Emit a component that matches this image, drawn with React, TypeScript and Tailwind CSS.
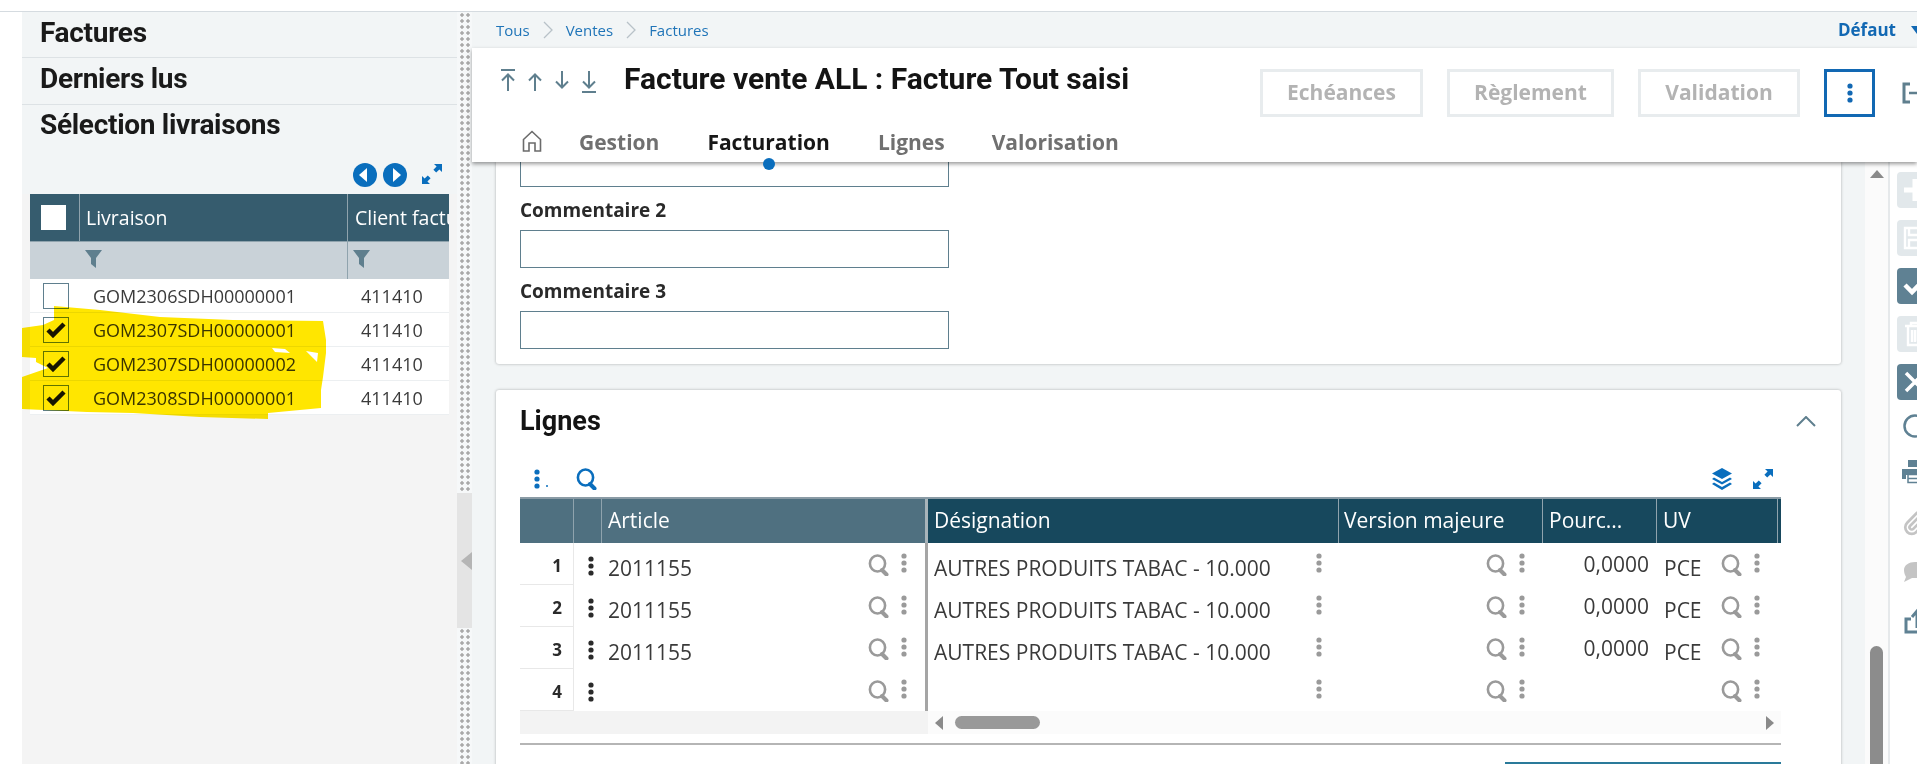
import React from 'react';
import { Paperclip } from 'lucide-react';

const SANS = "font-['Open_Sans',sans-serif]";
const HEAD = "font-['Roboto',sans-serif]";

const DELIVERIES = [
  { id: 'GOM2306SDH00000001', client: '411410', checked: false },
  { id: 'GOM2307SDH00000001', client: '411410', checked: true },
  { id: 'GOM2307SDH00000002', client: '411410', checked: true },
  { id: 'GOM2308SDH00000001', client: '411410', checked: true },
];

const LINES = [
  { n: 1, article: '2011155', label: 'AUTRES PRODUITS TABAC - 10.000', pct: '0,0000', uv: 'PCE' },
  { n: 2, article: '2011155', label: 'AUTRES PRODUITS TABAC - 10.000', pct: '0,0000', uv: 'PCE' },
  { n: 3, article: '2011155', label: 'AUTRES PRODUITS TABAC - 10.000', pct: '0,0000', uv: 'PCE' },
  { n: 4, article: '', label: '', pct: '', uv: '' },
];

function Kebab({ className }: { className: string }) {
  return (
    <svg width="6" height="20" viewBox="0 0 6 20" className={className} fill="currentColor">
      <circle cx="3" cy="3" r="2.6" />
      <circle cx="3" cy="10" r="2.6" />
      <circle cx="3" cy="17" r="2.6" />
    </svg>
  );
}

function SearchIcon({ className }: { className: string }) {
  return (
    <svg width="22" height="22" viewBox="0 0 22 22" className={className} fill="none" stroke="currentColor">
      <ellipse cx="9.5" cy="9.5" rx="7.6" ry="8" strokeWidth="2.6" />
      <path d="M14 16l4.5 4.5" strokeWidth="4" strokeLinecap="round" />
    </svg>
  );
}

function Funnel() {
  return (
    <svg width="17" height="18" viewBox="0 0 17 18" className="text-[#5f7f8e]" fill="currentColor">
      <path d="M0 0h17l-6 8v10l-5-4V8z" />
    </svg>
  );
}

function ExpandIcon() {
  return (
    <svg width="22" height="22" viewBox="0 0 22 22" className="text-[#0a6ebd]" fill="currentColor">
      <path d="M13 1h8v8l-2.6-2.6-3.2 3.2-2.8-2.8 3.2-3.2z" />
      <path d="M1 21v-8l2.6 2.6 3.2-3.2 2.8 2.8-3.2 3.2L9 21z" />
    </svg>
  );
}

function NavArrow({ dir, bar }: { dir: 'up' | 'down'; bar: boolean }) {
  return (
    <svg width="16" height="24" viewBox="0 0 16 24" fill="none" stroke="#5f7f8e" strokeWidth="2" className="shrink-0">
      {dir === 'up' ? (
        <>
          {bar && <path d="M1 1h14" />}
          <path d="M8 22V6M2 11.5L8 5.5l6 6" />
        </>
      ) : (
        <>
          {bar && <path d="M1 23h14" />}
          <path d="M8 2v16M2 12.5l6 6 6-6" />
        </>
      )}
    </svg>
  );
}

function PlainCheck() {
  return (
    <svg width="20" height="16" viewBox="0 0 20 16" fill="none" stroke="#171717" strokeWidth="4.5">
      <path d="M2 8l5 5L18 2" />
    </svg>
  );
}

function LeftPanel() {
  return (
    <aside className="relative w-[435px] shrink-0 bg-[#f4f4f4]">
      <div className={`${HEAD} bg-[#f2f5f6] text-[28px] font-bold tracking-[-0.3px] text-[#1a1a1a]`}>
        <div className="flex h-[46px] items-center border-b border-[#dde2e5] pb-[4px] pl-[18px]">Factures</div>
        <div className="flex h-[47px] items-center border-b border-[#dde2e5] pb-[4px] pl-[18px]">Derniers lus</div>
        <div className="flex h-[44px] items-center pb-[4px] pl-[18px]">Sélection livraisons</div>
        <div className="flex h-[45px] items-start justify-end gap-[6px] pr-[14px] pt-[14px]">
          <svg width="24" height="24" viewBox="0 0 24 24">
            <circle cx="12" cy="12" r="12" fill="#0a6ebd" />
            <path d="M14 5v14l-8-7z" fill="#fff" />
          </svg>
          <svg width="24" height="24" viewBox="0 0 24 24">
            <circle cx="12" cy="12" r="12" fill="#0a6ebd" />
            <path d="M10 5v14l8-7z" fill="#fff" />
          </svg>
          <span className="ml-[8px]">
            <ExpandIcon />
          </span>
        </div>
      </div>

      <div className={`${SANS} mx-[8px] w-[419px] overflow-hidden whitespace-nowrap`}>
        <div className="grid h-[47px] grid-cols-[50px_268px_101px] bg-[#365c6e] text-[19.5px] text-white">
          <div className="flex items-center border-r border-[#8fa3ad] pl-[11px]">
            <span className="h-[25px] w-[25px] bg-white" />
          </div>
          <div className="flex items-center border-r border-[#8fa3ad] pl-[6px]">Livraison</div>
          <div className="flex items-center overflow-hidden pl-[7px]">Client facturé</div>
        </div>
        <div className="grid h-[38px] grid-cols-[50px_268px_101px] border-t border-[#8fa3ad] bg-[#c9d2d8]">
          <div />
          <div className="flex items-center border-r border-[#8fa3ad] pb-[3px] pl-[5px]">
            <Funnel />
          </div>
          <div className="flex items-center pb-[3px] pl-[5px]">
            <Funnel />
          </div>
        </div>
        {DELIVERIES.map((row) => (
          <div
            key={row.id}
            className="grid h-[34px] grid-cols-[50px_268px_101px] border-b border-[#eceff1] bg-white pt-[1px] text-[18px] text-[#3a3a3a]"
          >
            <div className="flex items-center pl-[13px]">
              <span className="flex h-[26px] w-[26px] items-center justify-center border border-[#5f7f8e]">
                {row.checked && <PlainCheck />}
              </span>
            </div>
            <div className="flex items-center pl-[13px]">{row.id}</div>
            <div className="flex items-center pl-[13px] text-[18px]">{row.client}</div>
          </div>
        ))}
      </div>

      {/* marker highlight drawn on the screenshot */}
      <svg
        width="310"
        height="125"
        viewBox="22 300 310 125"
        className="absolute left-0 top-[288px] mix-blend-multiply"
      >
        <path
          fillRule="evenodd"
          fill="#ffe600"
          d="M54 306L100 310L160 317L233 320L323 321L326 340L326 353L323 377L321 390L321 408L268 413L268 419L200 417L133 413L87 412L22 409L22 377L48 368L36 362L36 358L22 357L22 328L43 325L54 320Z M272 348L285 349L290 353L275 352Z M306 351L318 353L317 362L313 358Z"
        />
      </svg>
    </aside>
  );
}

function Splitter() {
  const dots =
    'mx-auto w-[12px] bg-[radial-gradient(circle,#a9a9a9_1.5px,transparent_1.8px)] bg-[length:6px_6px]';
  return (
    <div className="flex w-[15px] shrink-0 flex-col bg-[#f6f8f9]">
      <div className={`${dots} h-[481px] shrink-0`} />
      <div className="flex h-[135px] shrink-0 items-center justify-end bg-[#e4e4e4]">
        <svg width="11" height="18" viewBox="0 0 11 18">
          <path d="M11 0v18L0 9z" fill="#b5b5b5" />
        </svg>
      </div>
      <div className={`${dots} flex-1`} />
    </div>
  );
}

function ActionButton({ label, width }: { label: string; width: string }) {
  return (
    <button
      className={`${SANS} ${width} flex h-[48px] items-center justify-center border-[3px] border-[#e8ecee] text-[21px] font-bold text-[#b3b3b3]`}
    >
      {label}
    </button>
  );
}

function Header() {
  return (
    <header className="relative z-10 h-[114px] shrink-0 bg-white pt-[21px] shadow-[0_2px_4px_rgba(0,0,0,0.4)]">
      <div className="flex h-[48px] items-start">
        <div className="flex items-center gap-[11px] pl-[28px]">
          <NavArrow dir="up" bar />
          <NavArrow dir="up" bar={false} />
          <NavArrow dir="down" bar={false} />
          <NavArrow dir="down" bar />
        </div>
        <h1 className={`${HEAD} ml-[27px] -mt-[13px] flex-1 text-[30px] font-bold text-[#141414]`}>
          Facture vente ALL : Facture Tout saisi
        </h1>
        <div className="flex shrink-0 items-center">
          <div className="flex gap-[24px]">
            <ActionButton label="Echéances" width="w-[163px]" />
            <ActionButton label="Règlement" width="w-[167px]" />
            <ActionButton label="Validation" width="w-[162px]" />
            <button className="flex h-[48px] w-[51px] items-center justify-center border-[3px] border-[#1268b3] text-[#1268b3]">
              <Kebab className="" />
            </button>
          </div>
          <div className="ml-[27px] w-[15px] overflow-hidden">
            <svg width="30" height="22" viewBox="0 0 30 22" fill="none" stroke="#5f7f8e" strokeWidth="3" className="block">
              <path d="M8 2H2v18h6" />
              <path d="M7 11h20M21 5l6 6-6 6" strokeWidth="2.5" />
            </svg>
          </div>
        </div>
      </div>
      <nav className={`${SANS} mt-[8px] flex h-[36px] items-center text-[21px] font-bold text-[#707070]`}>
        <svg width="20" height="22" viewBox="0 0 20 22" fill="none" stroke="#6b6b6b" strokeWidth="1.6" className="ml-[50px] -mt-[4px] shrink-0">
          <path d="M1.5 21V9.5L10 1.5l8.500 8V21h-5.500v-8H7v8z" />
        </svg>
        <span className="ml-[37px]">Gestion</span>
        <span className="relative ml-[48px] text-[#171717]">
          Facturation
          <span className="absolute -bottom-[11px] left-1/2 h-[12px] w-[12px] -translate-x-1/2 rounded-full bg-[#0a6ebd]" />
        </span>
        <span className="ml-[48px]">Lignes</span>
        <span className="ml-[47px]">Valorisation</span>
      </nav>
    </header>
  );
}

function Breadcrumb() {
  const chevron = (
    <svg width="10" height="18" viewBox="0 0 10 18" fill="none" stroke="#b8c2c8" strokeWidth="1.3">
      <path d="M1 1l8 8-8 8" />
    </svg>
  );
  return (
    <div className={`${SANS} flex h-[36px] shrink-0 items-center bg-[#f2f5f6] pl-[24px] text-[15px] text-[#1f74b8]`}>
      <span>Tous</span>
      <span className="mx-[13px]">{chevron}</span>
      <span>Ventes</span>
      <span className="mx-[13px]">{chevron}</span>
      <span>Factures</span>
      <span className="ml-auto text-[17px] font-bold text-[#1268b3]">Défaut</span>
      <span className="ml-[15px] -mr-[6px] h-0 w-0 border-t-[8px] border-r-[6px] border-l-[6px] border-r-transparent border-l-transparent border-t-[#1268b3]" />
    </div>
  );
}

function RailSquare({ active, children }: { active?: boolean; children: React.ReactNode }) {
  return (
    <div
      className={`flex h-[36px] w-[36px] items-center justify-center rounded-[4px] ${
        active ? 'bg-[#5f8193]' : 'bg-[#e2e8eb]'
      }`}
    >
      {children}
    </div>
  );
}

function Rail() {
  return (
    <div className="flex w-[29px] shrink-0 flex-col overflow-hidden border-l-2 border-[#e6e9eb] bg-white pl-[7px] pt-[10px]">
      <div className="flex w-[36px] flex-col gap-[12px]">
        <RailSquare>
          <svg width="24" height="24" viewBox="0 0 24 24" stroke="#fff" strokeWidth="5">
            <path d="M12 1v22M1 12h22" />
          </svg>
        </RailSquare>
        <RailSquare>
          <svg width="24" height="24" viewBox="0 0 24 24" fill="none" stroke="#fff" strokeWidth="2.4">
            <path d="M2 2h16l4 4v16H2zM6 2v7h11V2M6 22v-8h12v8" />
          </svg>
        </RailSquare>
        <RailSquare active>
          <svg width="24" height="20" viewBox="0 0 24 20" fill="none" stroke="#fff" strokeWidth="4.5">
            <path d="M2 9l7 7L22 3" />
          </svg>
        </RailSquare>
        <RailSquare>
          <svg width="22" height="26" viewBox="0 0 22 26" fill="none" stroke="#fff" strokeWidth="2.4">
            <path d="M1 5h20M7 5V2h8v3M4 5v19h14V5M8 9v12M11 9v12M14 9v12" />
          </svg>
        </RailSquare>
        <RailSquare active>
          <svg width="24" height="24" viewBox="0 0 24 24" stroke="#fff" strokeWidth="3.5">
            <path d="M3 3l18 18M21 3L3 21" />
          </svg>
        </RailSquare>
        <div className="flex h-[30px] justify-center pt-[2px]">
          <svg width="24" height="24" viewBox="0 0 24 24" fill="none" stroke="#5f8193" strokeWidth="2.5">
            <circle cx="12" cy="12" r="10.5" />
          </svg>
        </div>
        <div className="mt-[6px] flex justify-center">
          <svg width="26" height="24" viewBox="0 0 26 24">
            <path d="M6 0h14v7H6zM0 9h26v10h-4v-4H4v4H0z" fill="#5f8193" />
            <path d="M6 14.500h14v8H6zM6 18.500h14" fill="none" stroke="#5f8193" strokeWidth="1.5" />
          </svg>
        </div>
        <div className="mt-[14px] flex justify-center">
          <Paperclip size={26} strokeWidth={2.5} className="text-[#c4c4c4]" />
        </div>
        <div className="mt-[14px] flex justify-center">
          <svg width="26" height="20" viewBox="0 0 26 20" fill="#c4c4c4">
            <path d="M2 8c0-5 5-8 11-8s11 3 11 8-5 8-11 8h-3l-8 4 2-5c-1-2-2-4-2-7z" />
          </svg>
        </div>
        <div className="mt-[14px] flex justify-center pl-[4px]">
          <svg width="26" height="26" viewBox="0 0 26 26" fill="none" stroke="#5f8193" strokeWidth="3">
            <path d="M7 11H2v13h20V18M13 20V5M8 9l5-6 5 6" />
          </svg>
        </div>
      </div>
    </div>
  );
}

const LINE_GRID = 'grid grid-cols-[54px_28px_326px_411px_204px_114px_121px_1fr]';

function CellTools() {
  return (
    <div className="ml-auto flex shrink-0 items-center gap-[11px] pr-[18px] pt-[2px]">
      <SearchIcon className="text-[#9a9a9a]" />
      <Kebab className="-mt-[5px] text-[#9a9a9a]" />
    </div>
  );
}

function LinesTable() {
  return (
    <div className={`${SANS} w-[1261px] overflow-hidden whitespace-nowrap`}>
      <div className={`${LINE_GRID} h-[46px] border-t-2 border-[#8a9ba5] text-[21px] text-white`}>
        <div className="border-r border-[#8fa3ad] bg-[#4f7080]" />
        <div className="border-r border-[#8fa3ad] bg-[#4f7080]" />
        <div className="flex items-center border-r-[3px] border-[#a8b4ba] bg-[#4f7080] pl-[6px]">Article</div>
        <div className="flex items-center border-r border-[#8fa3ad] bg-[#17485d] pl-[6px]">Désignation</div>
        <div className="flex items-center border-r border-[#8fa3ad] bg-[#17485d] pl-[5px]">Version majeure</div>
        <div className="flex items-center border-r border-[#8fa3ad] bg-[#17485d] pl-[6px]">Pourc...</div>
        <div className="flex items-center border-r border-[#8fa3ad] bg-[#17485d] pl-[6px]">UV</div>
        <div className="bg-[#17485d]" />
      </div>
      {LINES.map((line) => (
        <div key={line.n} className={`${LINE_GRID} h-[42px] text-[21px] text-[#3a3a3a]`}>
          <div className="flex items-center justify-end border-r border-b border-[#e8e8e8] pr-[11px] pt-[4px] text-[17px] font-bold text-[#2a2a2a]">
            {line.n}
          </div>
          <div className="flex items-center pl-[14px] pt-[4px] text-[#2a2a2a]">
            <Kebab className="" />
          </div>
          <div className="flex items-center border-r-[3px] border-[#a5a5a5] pl-[6px]">
            <span className="pt-[10px]">{line.article}</span>
            <CellTools />
          </div>
          <div className="flex items-center pl-[6px]">
            <span className="pt-[10px]">{line.label}</span>
            <div className="ml-auto pr-[17px] pt-[2px]">
              <Kebab className="-mt-[5px] text-[#9a9a9a]" />
            </div>
          </div>
          <div className="flex items-center">
            <CellTools />
          </div>
          <div className="flex items-center justify-end pr-[8px] pt-[2px]">{line.pct}</div>
          <div className="flex items-center pl-[7px]">
            <span className="pt-[10px]">{line.uv}</span>
            <CellTools />
          </div>
          <div />
        </div>
      ))}
      <div className="flex h-[23px] bg-[#fbfbfb]">
        <div className="w-[408px] bg-[#f3f3f3]" />
        <div className="flex flex-1 items-center pl-[7px] pr-[7px]">
          <svg width="8" height="14" viewBox="0 0 8 14">
            <path d="M8 0v14L0 7z" fill="#8a8a8a" />
          </svg>
          <span className="ml-[12px] h-[13px] w-[85px] rounded-full bg-[#999]" />
          <svg width="8" height="14" viewBox="0 0 8 14" className="ml-auto">
            <path d="M0 0v14l8-7z" fill="#8a8a8a" />
          </svg>
        </div>
      </div>
    </div>
  );
}

function Content() {
  return (
    <div className="flex min-h-0 flex-1 overflow-hidden">
      <div className="w-[1393px] shrink-0 overflow-hidden bg-[#f2f5f6] px-[24px]">
        <section className={`${SANS} h-[202px] rounded-b-[3px] bg-white px-[24px] shadow-[0_0_3px_rgba(0,0,0,0.3)]`}>
          <div className="h-[25px] w-[429px] border border-t-0 border-[#5f7f8e]" />
          <label className="mt-[11px] mb-[8px] block h-[24px] text-[19px] font-bold leading-[24px] text-[#2a2a2a]">
            Commentaire 2
          </label>
          <div className="h-[38px] w-[429px] border border-[#5f7f8e]" />
          <label className="mt-[11px] mb-[8px] block h-[24px] text-[19px] font-bold leading-[24px] text-[#2a2a2a]">
            Commentaire 3
          </label>
          <div className="h-[38px] w-[429px] border border-[#5f7f8e]" />
        </section>
        <section className="mt-[26px] h-[400px] rounded-t-[3px] bg-white pl-[24px] pr-[60px] pt-[15px] shadow-[0_0_3px_rgba(0,0,0,0.3)]">
          <div className="flex h-[32px] items-center">
            <h2 className={`${HEAD} text-[27px] font-bold text-[#141414]`}>Lignes</h2>
            <svg width="20" height="11" viewBox="0 0 20 11" fill="none" stroke="#5f7f8e" strokeWidth="2" className="ml-auto -mr-[35px]">
              <path d="M1 10l9-9 9 9" />
            </svg>
          </div>
          <div className="mt-[30px] mb-[6px] flex h-[24px] items-center pl-[14px]">
            <Kebab className="text-[#0a6ebd]" />
            <span className="ml-[6px] mt-[14px] h-[2px] w-[2px] rounded-full bg-[#0a6ebd]" />
            <SearchIcon className="ml-[28px] text-[#0a6ebd]" />
            <svg width="22" height="22" viewBox="0 0 22 22" fill="#0a6ebd" className="ml-auto mr-[19px]">
              <path d="M11 0l10 5.500-10 5.500L1 5.500z" />
              <path d="M3 9.500l8 4.500 8-4.500 2 1.500-10 5.500L1 11z" />
              <path d="M3 14.500l8 4.500 8-4.500 2 1.500-10 6L1 16z" />
            </svg>
            <span className="mr-[7px]">
              <ExpandIcon />
            </span>
          </div>
          <LinesTable />
          <div className="mt-[9px] border-t-2 border-[#b5b5b5]" />
          <div className="ml-auto mt-[17px] w-[276px] border-t-2 border-[#2a7a9a]" />
        </section>
      </div>

      {/* scrollbar */}
      <div className="flex w-[23px] shrink-0 flex-col items-center bg-[#fbfbfb] pt-[8px]">
        <svg width="14" height="8" viewBox="0 0 14 8">
          <path d="M7 0l7 8H0z" fill="#8a8a8a" />
        </svg>
        <div className="mt-auto h-[118px] w-[13px] rounded-t-full bg-[#8c8c8c]" />
      </div>

      <Rail />
    </div>
  );
}

export default function App() {
  return (
    <div className="h-screen w-full overflow-hidden bg-white pt-[11px]">
      <div className="flex h-full border-t border-[#d5dbe0]">
        <div className="w-[22px] shrink-0 bg-white" />
        <LeftPanel />
        <Splitter />
        <main className="flex min-w-0 flex-1 flex-col">
          <Breadcrumb />
          <Header />
          <Content />
        </main>
      </div>
    </div>
  );
}
